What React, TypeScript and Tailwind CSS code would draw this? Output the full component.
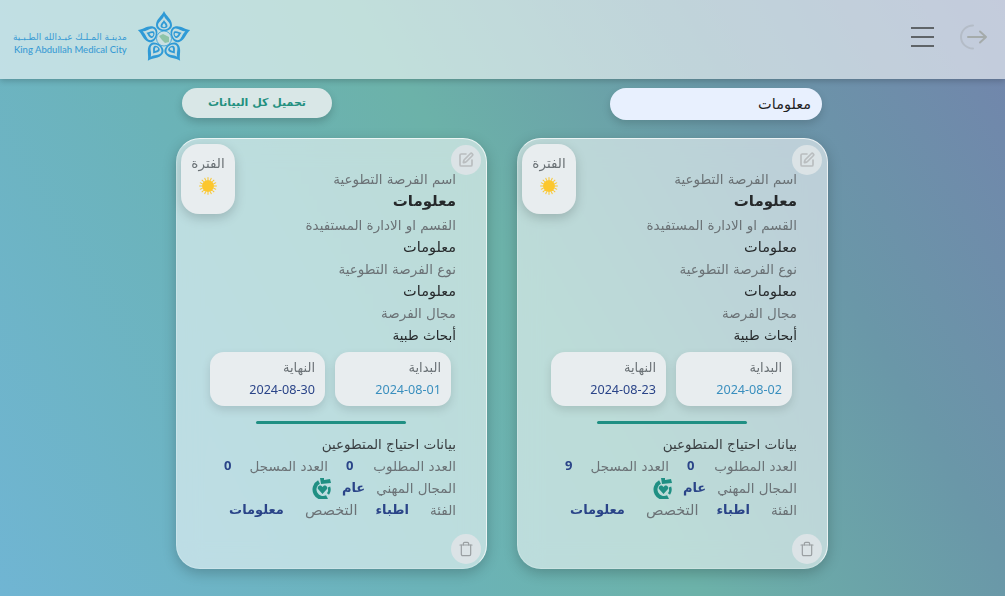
import React from 'react';
import { SquarePen, Trash } from 'lucide-react';

interface Opportunity {
  id: number;
  start: string;
  end: string;
  registered: string;
}

const opportunities: Opportunity[] = [
  { id: 1, start: '2024-08-02', end: '2024-08-23', registered: '9' },
  { id: 2, start: '2024-08-01', end: '2024-08-30', registered: '0' }
];

function Logo() {
  const petals = [0, 72, 144, 216, 288];
  return (
    <svg width="54" height="52" viewBox="0 0 54 52" fill="none">
      {petals.map((angle) => (
        <g key={angle} transform={`rotate(${angle} 27 27.5)`}>
          <path d="M27 0 C29 5 35 8 35 14 C35 18 31 20 27 20 C23 20 19 18 19 14 C19 8 25 5 27 0Z" fill="#2f9ad6" />
          <path d="M27 5 C28.5 9 33 11 33 14 C33 16.5 30 18.5 27 18.5 C24 18.5 21 16.5 21 14 C21 11 25.5 9 27 5Z" fill="#c2dde0" />
          <path d="M27 9 C28 11 30.5 12.5 30.5 15 C30.5 18 23.5 18 23.5 15 C23.5 12.5 26 11 27 9Z" fill="#2f9ad6" />
          <path d="M27 12 C27.6 13 28.6 14 28.6 15 C28.6 16.5 25.4 16.5 25.4 15 C25.4 14 26.4 13 27 12Z" fill="#c2dde0" />
        </g>
      ))}
      <circle cx="27" cy="27.5" r="7.5" fill="#c9e0e2" stroke="#2f9ad6" strokeWidth="0.8" />
      <path d="M22 25 L26 23 L32 26 L32 31 L28 32 L25 29Z" fill="#8fc4a8" />
    </svg>
  );
}

function Sun() {
  const rays = Array.from({ length: 16 }, (_, i) => i * 22.5);
  return (
    <svg width="18" height="18" viewBox="0 0 18 18">
      {rays.map((angle) => (
        <line key={angle} x1="9" y1="0.2" x2="9" y2="3" stroke="#f9c62d" strokeWidth="1" transform={`rotate(${angle} 9 9)`} />
      ))}
      <circle cx="9" cy="9" r="6" fill="#fcc72e" />
    </svg>
  );
}

function GeneralIcon() {
  return (
    <svg width="21" height="22" viewBox="0 0 21 22" fill="none">
      <path d="M7 5 A8 8 0 1 0 15 20" stroke="#1f8f83" strokeWidth="4" />
      <path d="M17 10 A8 8 0 0 1 16 17" stroke="#1f8f83" strokeWidth="2.5" />
      <path d="M8 1 H12 V3 L18 2 L19 6 L9 7Z" fill="#1f8f83" />
      <path d="M10.5 17 L6 12 C5 10 7 8 9 8.5 L10.5 10 L12 8.5 C14 8 16 10 15 12Z" fill="#1f8f83" />
    </svg>
  );
}

function LogoutIcon() {
  return (
    <svg width="28" height="26" viewBox="0 0 28 26" fill="none" strokeWidth="2" strokeLinecap="round" strokeLinejoin="round">
      <path d="M13 1.5 A12 11.5 0 1 0 13 24.5" stroke="#b4bcc7" />
      <path d="M8 13 H26 M20 7.5 L26 13 L20 18.5" stroke="#a5abab" />
    </svg>
  );
}

function Card({ item }: { item: Opportunity }) {
  const label = 'text-[13.5px] leading-[22px] text-[#6b7276]';
  const value = 'text-[14.5px] leading-[22px] text-[#26292b]';
  const number = "text-[13px] font-bold text-[#2a4488] font-['Noto_Sans',sans-serif]";
  const strong = 'text-[13px] leading-[22px] font-bold text-[#2a4488]';
  return (
    <div className="relative w-[311px] h-[431px] rounded-[24px] border border-white/20 border-t-white/70 border-r-white/70 bg-white/55 backdrop-blur-md pt-[29px] pr-[30px] shadow-[0_4px_14px_rgba(0,0,0,0.22)]">
      <button className="absolute top-[6px] right-[5px] w-[30px] h-[30px] rounded-full bg-[#dbe3e6] flex items-center justify-center text-[#b9bdbf]">
        <SquarePen size={16} strokeWidth={2.5} />
      </button>
      <div className="absolute top-[5px] left-[4px] w-[54px] h-[70px] rounded-[18px] bg-[#e8edef] shadow-[0_4px_12px_rgba(0,0,0,0.18)] flex flex-col items-center pt-[9px]">
        <span className="text-[13.5px] leading-[20px] text-[#6b7276]">الفترة</span>
        <span className="mt-[4px]"><Sun /></span>
      </div>

      <p className={label}>اسم الفرصة التطوعية</p>
      <p className="text-[15px] leading-[22px] font-bold text-[#26292b]">معلومات</p>
      <p className={`${label} mt-[2px]`}>القسم او الادارة المستفيدة</p>
      <p className={value}>معلومات</p>
      <p className={label}>نوع الفرصة التطوعية</p>
      <p className={value}>معلومات</p>
      <p className={label}>مجال الفرصة</p>
      <p className="text-[13.5px] leading-[22px] text-[#26292b]">أبحاث طبية</p>

      <div className="flex gap-[10px] mt-[6px] mr-[5px]">
        <div className="w-[116px] h-[54px] rounded-[14px] bg-[#e8edef] shadow-[0_4px_10px_rgba(0,0,0,0.12)] px-[10px] pt-[6px]">
          <p className="text-[13px] leading-[20px] text-[#6b7276]">البداية</p>
          <p className="text-[12.6px] leading-[23px] text-[#3a8fbe] text-right font-['Noto_Sans',sans-serif]" dir="ltr">{item.start}</p>
        </div>
        <div className="w-[115px] h-[54px] rounded-[14px] bg-[#e8edef] shadow-[0_4px_10px_rgba(0,0,0,0.12)] px-[10px] pt-[6px]">
          <p className="text-[13px] leading-[20px] text-[#6b7276]">النهاية</p>
          <p className="text-[12.6px] leading-[23px] text-[#2a4488] text-right font-['Noto_Sans',sans-serif]" dir="ltr">{item.end}</p>
        </div>
      </div>

      <div className="w-[150px] h-[3px] rounded-full bg-[#1f8f83] mt-[15px] mr-[50px]" />

      <p className="text-[13.5px] leading-[22px] text-[#3a3f42] mt-[9px]">بيانات احتياج المتطوعين</p>
      <div className="flex items-center">
        <span className={label}>العدد المطلوب</span>
        <span className={`${number} mr-[20px]`}>0</span>
        <span className={`${label} mr-[18px]`}>العدد المسجل</span>
        <span className={`${number} mr-[18px]`}>{item.registered}</span>
      </div>
      <div className="flex items-center h-[22px]">
        <span className={label}>المجال المهني</span>
        <span className={`${strong} mr-[11px]`}>عام</span>
        <span className="mr-[9px]"><GeneralIcon /></span>
      </div>
      <div className="flex items-center">
        <span className={label}>الفئة</span>
        <span className={`${strong} mr-[21px]`}>اطباء</span>
        <span className="text-[14.5px] leading-[22px] text-[#6b7276] mr-[18px]">التخصص</span>
        <span className={`${strong} mr-[21px]`}>معلومات</span>
      </div>

      <button className="absolute bottom-[4px] right-[5px] w-[30px] h-[30px] rounded-full bg-[#dbe3e6] flex items-center justify-center text-[#9a9fa2]">
        <Trash size={16} strokeWidth={1.8} />
      </button>
    </div>
  );
}

export default function App() {
  return (
    <div
      dir="rtl"
      className="w-[1005px] h-[596px] overflow-hidden bg-[linear-gradient(60deg,#70b5d3_0%,#6bb3b8_32%,#6cb2a9_52%,#6a97a8_76%,#7284ac_100%)] font-['DejaVu_Sans',sans-serif]"
    >
      <header className="h-[79px] flex items-start justify-between bg-white/58 shadow-[0_2px_6px_rgba(0,0,0,0.2)] pt-[11px] pl-[13px] pr-[17px]" dir="ltr">
        <div className="flex items-start gap-[10px]">
          <div className="flex flex-col items-end text-[#3a9bd4] pt-[19px]">
            <span className="text-[9px] leading-[14px]" dir="rtl">مدينـة المـلـك عبـدالله الطـبـية</span>
            <span className="text-[9.5px] leading-[12px] font-medium font-['Lato',sans-serif]">King Abdullah Medical City</span>
          </div>
          <Logo />
        </div>
        <div className="flex items-start gap-[26px] pt-[13px]">
          <div className="flex flex-col gap-[7px] pt-[3px]">
            <span className="block w-[23px] h-[2px] bg-[#5f6468]" />
            <span className="block w-[23px] h-[2px] bg-[#5f6468]" />
            <span className="block w-[23px] h-[2px] bg-[#5f6468]" />
          </div>
          <LogoutIcon />
        </div>
      </header>

      <main className="w-[652px] mr-[177px]">
        <div className="flex justify-between items-start pt-[9px] px-[6px] h-[59px]">
          <input
            readOnly
            value="معلومات"
            className="w-[212px] h-[32px] rounded-full bg-[#e8f0fe] px-[11px] text-[14.5px] text-[#1f2224] shadow-[0_4px_8px_rgba(0,0,0,0.15)] outline-none"
          />
          <button className="w-[150px] h-[30px] rounded-full bg-[#d9e7e7] text-[11px] font-bold text-[#23907f] shadow-[0_4px_8px_rgba(0,0,0,0.18)]">
            تحميل كل البيانات
          </button>
        </div>
        <div className="flex gap-[30px]">
          {opportunities.map((item) => (
            <Card key={item.id} item={item} />
          ))}
        </div>
      </main>
    </div>
  );
}
